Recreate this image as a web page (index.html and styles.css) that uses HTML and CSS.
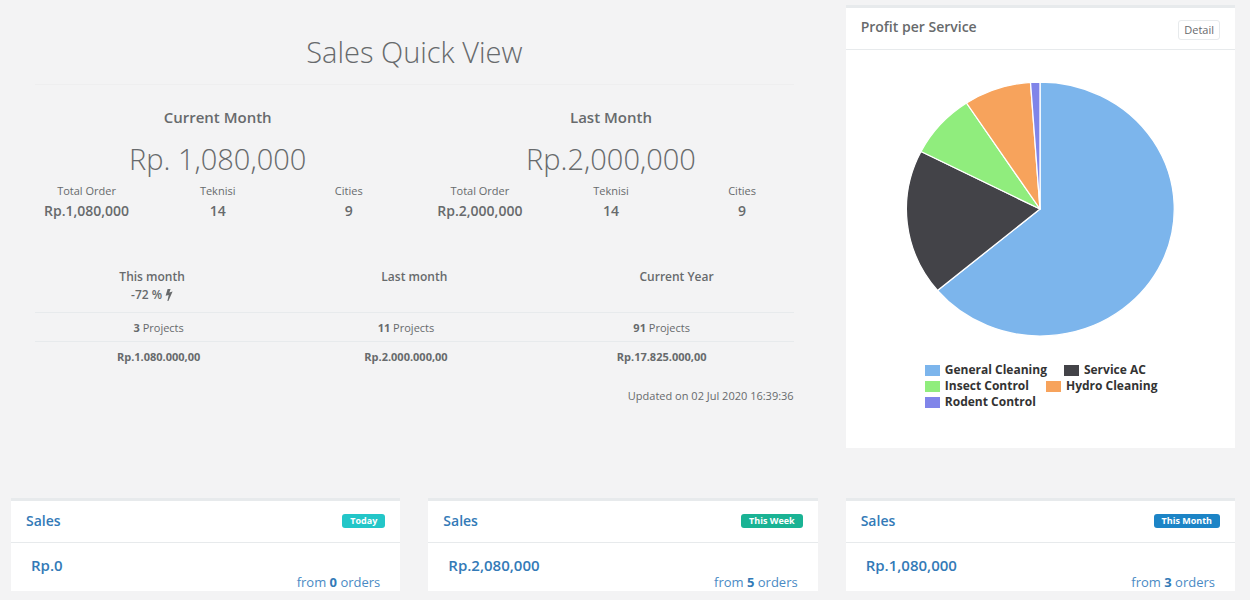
FILE: index.html
```html
<!DOCTYPE html>
<html lang="en">
<head>
<meta charset="utf-8">
<title>Sales Quick View</title>
<link rel="stylesheet" href="styles.css">
</head>
<body>
<main class="dashboard">
  <section class="overview">
    <h1 class="overview-title">Sales Quick View</h1>
    <div class="months">
      <section class="month">
        <h2 class="month-name">Current Month</h2>
        <p class="month-total">Rp. 1,080,000</p>
        <dl class="stats">
          <div><dt>Total Order</dt><dd>Rp.1,080,000</dd></div>
          <div><dt>Teknisi</dt><dd>14</dd></div>
          <div><dt>Cities</dt><dd>9</dd></div>
        </dl>
      </section>
      <section class="month">
        <h2 class="month-name">Last Month</h2>
        <p class="month-total">Rp.2,000,000</p>
        <dl class="stats">
          <div><dt>Total Order</dt><dd>Rp.2,000,000</dd></div>
          <div><dt>Teknisi</dt><dd>14</dd></div>
          <div><dt>Cities</dt><dd>9</dd></div>
        </dl>
      </section>
    </div>
    <div class="periods">
      <div class="period">This month
        <div class="change">-72 % <svg class="bolt" viewBox="0 0 8 12" aria-hidden="true"><path d="M2.6 0H5.6L4.3 3.4L7.6 2.6L3.4 12H2.4L3.7 6L0.6 6.8Z"/></svg></div>
      </div>
      <div class="period">Last month</div>
      <div class="period">Current Year</div>
    </div>
    <table class="projects">
      <colgroup><col class="col-side"><col class="col-side"><col></colgroup>
      <tbody>
        <tr><td><strong>3</strong> Projects</td><td><strong>11</strong> Projects</td><td><strong>91</strong> Projects</td></tr>
        <tr class="amounts"><td>Rp.1.080.000,00</td><td>Rp.2.000.000,00</td><td>Rp.17.825.000,00</td></tr>
      </tbody>
    </table>
    <p class="updated">Updated on 02 Jul 2020 16:39:36</p>
  </section>

  <section class="card">
    <header class="card-head">
      <h2 class="card-title">Profit per Service</h2>
      <button class="detail" type="button">Detail</button>
    </header>
    <div class="chart">
      <svg class="pie" viewBox="0 0 268 254" role="img" aria-label="Profit per service pie chart">
        <g stroke="#fff" stroke-width="1.3" stroke-linejoin="round">
          <path fill="#7cb5ec" d="M134 127V0A134 127 0 1 1 31.500 208.500Z"/>
          <path fill="#434348" d="M134 127L31.500 208.500A134 127 0 0 1 15 69.500Z"/>
          <path fill="#90ed7d" d="M134 127L15 69.500A134 127 0 0 1 60.500 21Z"/>
          <path fill="#f7a35c" d="M134 127L60.500 21A134 127 0 0 1 124.500 0.300Z"/>
          <path fill="#8085e9" d="M134 127L124.500 0.300A134 127 0 0 1 134 0Z"/>
        </g>
      </svg>
      <ul class="legend">
        <li class="blue">General Cleaning</li>
        <li class="dark">Service AC</li>
        <li class="green">Insect Control</li>
        <li class="orange">Hydro Cleaning</li>
        <li class="purple">Rodent Control</li>
      </ul>
    </div>
  </section>

  <section class="card sales">
    <header class="card-head"><h2 class="card-title"><a href="#today">Sales</a></h2><span class="tag tag-today">Today</span></header>
    <div class="sales-body"><a class="amount" href="#today">Rp.0</a><a class="orders" href="#today">from <strong>0</strong> orders</a></div>
  </section>
  <section class="card sales">
    <header class="card-head"><h2 class="card-title"><a href="#week">Sales</a></h2><span class="tag tag-week">This Week</span></header>
    <div class="sales-body"><a class="amount" href="#week">Rp.2,080,000</a><a class="orders" href="#week">from <strong>5</strong> orders</a></div>
  </section>
  <section class="card sales">
    <header class="card-head"><h2 class="card-title"><a href="#month">Sales</a></h2><span class="tag tag-month">This Month</span></header>
    <div class="sales-body"><a class="amount" href="#month">Rp.1,080,000</a><a class="orders" href="#month">from <strong>3</strong> orders</a></div>
  </section>
</main>
</body>
</html>
```
FILE: styles.css
```css
* { box-sizing: border-box; }

body {
  margin: 0;
  background: #f3f3f4;
  color: #676a6c;
  font-family: "Open Sans", "Liberation Sans", sans-serif;
  font-size: 13px;
  line-height: 18px;
}

h1, h2, p, dl, dd, ul { margin: 0; padding: 0; }
a { color: #337ab7; text-decoration: none; }

.dashboard {
  display: grid;
  grid-template-columns: repeat(3, minmax(0, 1fr));
  gap: 50px 28px;
  align-items: start;
  padding: 5px 15px 9px 11px;
}

/* Overview */
.overview { grid-column: span 2; padding: 27px 10px 0; text-align: center; }
.overview-title {
  margin: 0 14px 22px;
  padding-bottom: 12px;
  border-bottom: 1px solid #eeeeef;
  font-size: 29px;
  line-height: 40px;
  font-weight: 300;
}
.months { display: grid; grid-template-columns: 1fr 1fr; }
.month-name { font-size: 15px; line-height: 20px; font-weight: 600; }
.month-total { margin-top: 12px; font-size: 29px; line-height: 40px; font-weight: 300; }
.stats { display: grid; grid-template-columns: repeat(3, 1fr); margin-top: 2px; }
.stats dt { font-size: 11px; line-height: 20px; }
.stats dd { font-size: 14px; line-height: 20px; font-weight: 600; }
.periods {
  display: grid;
  grid-template-columns: repeat(3, 1fr);
  margin-top: 47px;
  font-size: 12px;
  font-weight: 600;
}
.bolt { width: 8px; height: 12px; fill: currentColor; vertical-align: -2px; }
.projects {
  width: calc(100% - 28px);
  margin: 8px 14px 0;
  border-collapse: collapse;
  table-layout: fixed;
  font-size: 11px;
}
.col-side { width: 32.6%; }
.projects td { height: 29px; padding: 1px 0 0; border-top: 1px solid #e7eaec; }
.projects strong { font-weight: 700; }
.amounts { font-weight: 700; }
.updated { margin: 16px 14px 0; font-size: 11px; text-align: right; }

/* Cards */
.card { background: #fff; border-top: 3px solid #e7eaec; }
.card-head {
  display: flex;
  justify-content: space-between;
  align-items: flex-start;
  height: 42px;
  padding: 10px 15px 0;
  border-bottom: 1px solid #e7eaec;
}
.card-title { font-size: 14px; line-height: 18px; font-weight: 600; }
.detail {
  margin-top: 2px;
  padding: 0 5px;
  border: 1px solid #e7eaec;
  border-radius: 3px;
  background: #fff;
  color: inherit;
  font-family: inherit;
  font-size: 11px;
  line-height: 18px;
}
.chart {
  display: flex;
  flex-direction: column;
  align-items: center;
  padding: 32px 15px 38px;
}
.pie { width: 268px; max-width: 100%; overflow: visible; }
.legend {
  display: flex;
  flex-wrap: wrap;
  column-gap: 17px;
  width: 240px;
  margin: 26px 0 0 9px;
  list-style: none;
  color: #333;
  font-size: 12px;
  line-height: 16px;
  font-weight: 700;
}
.legend li { display: flex; align-items: center; gap: 5px; white-space: nowrap; }
.legend li::before { content: ""; width: 15px; height: 11px; background: #434348; }
.legend .blue::before { background: #7cb5ec; }
.legend .green::before { background: #90ed7d; }
.legend .orange::before { background: #f7a35c; }
.legend .purple::before { background: #8085e9; }

/* Sales cards */
.sales .card-head { padding-top: 11px; }
.tag {
  margin-top: 2px;
  padding: 0 8px;
  border-radius: 3px;
  color: #fff;
  font-size: 9px;
  line-height: 14px;
  font-weight: 700;
}
.tag-today { background: #23c6c8; }
.tag-week { background: #1ab394; }
.tag-month { background: #1c84c6; }
.sales-body { display: flex; flex-direction: column; padding: 12px 20px 2px; }
.amount { font-size: 15px; line-height: 20px; font-weight: 600; }
.orders { align-self: flex-end; color: #4a8ac4; font-size: 13px; line-height: 14px; }
.orders strong { color: #337ab7; font-weight: 700; }
```
